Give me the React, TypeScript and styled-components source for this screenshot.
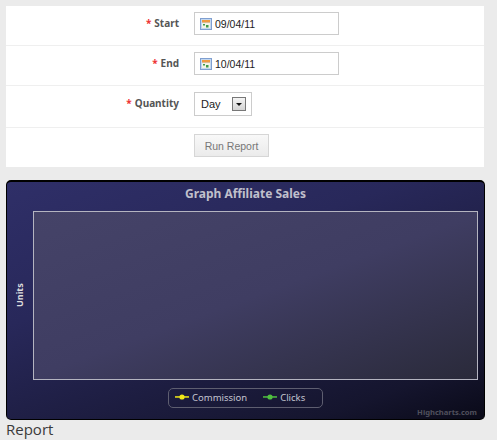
import * as React from "react";
import styled, { createGlobalStyle } from "styled-components";

const Global = createGlobalStyle`
  html, body {
    margin: 0;
    padding: 0;
    background: #ebebeb;
    overflow: hidden;
  }
`;

const Page = styled.div`
  width: 497px;
  height: 440px;
  padding: 6px 12px 0 6px;
  box-sizing: border-box;
  font-family: "Liberation Sans", Arial, sans-serif;
`;

const Form = styled.div`
  width: 478px;
  height: 161px;
  background: #fff;
  display: flex;
  flex-direction: column;
`;

const Row = styled.div<{ $h: number }>`
  height: ${p => p.$h}px;
  box-sizing: border-box;
  display: flex;
  padding-top: 6px;
  border-bottom: 1px solid #efefef;
  &:last-child {
    border-bottom: 0;
  }
`;

const Label = styled.div`
  width: 173px;
  text-align: right;
  font-family: "Noto Sans", sans-serif;
  font-size: 10px;
  font-weight: bold;
  color: #555;
  padding-top: 4px;
  line-height: 14px;
`;

const Star = styled.span`
  color: #ee3333;
  margin-right: 3px;
`;

const Field = styled.div`
  margin-left: 15px;
`;

const DateBox = styled.div`
  width: 145px;
  height: 23px;
  box-sizing: border-box;
  border: 1px solid #ccc;
  display: flex;
  align-items: center;
  padding-left: 5px;
  gap: 3px;
  font-size: 10.5px;
  color: #222;
`;

const SelectBox = styled.div`
  width: 58px;
  height: 24px;
  box-sizing: border-box;
  border: 1px solid #ccc;
  display: flex;
  align-items: center;
  justify-content: space-between;
  padding: 0 5px 0 6px;
  font-size: 11px;
  color: #222;
`;

const Arrow = styled.div`
  width: 14px;
  height: 14px;
  box-sizing: border-box;
  border: 1px solid #777;
  background: linear-gradient(#f4f4f4, #d4d4d4);
  display: flex;
  align-items: center;
  justify-content: center;
  &::after {
    content: "";
    border-top: 3px solid #111;
    border-left: 3px solid transparent;
    border-right: 3px solid transparent;
  }
`;

const RunButton = styled.button`
  width: 75px;
  height: 23px;
  padding: 0;
  box-sizing: border-box;
  border: 1px solid #d6d6d6;
  background: linear-gradient(#f8f8f8, #ebebeb);
  color: #777;
  font-family: "Liberation Sans", Arial, sans-serif;
  font-size: 10.5px;
`;

const Chart = styled.div`
  position: relative;
  width: 479px;
  height: 240px;
  margin-top: 13px;
  box-sizing: border-box;
  border: 1px solid #000;
  border-top-width: 2px;
  border-radius: 5px;
  background: linear-gradient(160deg, #2f2f68 0%, #28285a 35%, #15152e 85%, #0a0a18 100%);
  display: flex;
  flex-direction: column;
  align-items: center;
  font-family: "Noto Sans", sans-serif;
`;

const ChartTitle = styled.div`
  height: 29px;
  padding-top: 3px;
  box-sizing: border-box;
  font-size: 12px;
  font-weight: bold;
  color: #c0c0cc;
  line-height: 17px;
`;

const PlotRow = styled.div`
  display: flex;
  align-self: stretch;
  height: 169px;
`;

const AxisTitle = styled.div`
  width: 26px;
  display: flex;
  align-items: center;
  justify-content: center;
  writing-mode: vertical-rl;
  transform: rotate(180deg);
  padding-left: 2px;
  box-sizing: border-box;
  font-size: 9px;
  font-weight: bold;
  color: #ddd;
`;

const Plot = styled.div`
  width: 445px;
  box-sizing: border-box;
  border: 1px solid #b4b4c0;
  background: linear-gradient(160deg, #454368 0%, #3f3d62 50%, #2a2a3a 100%);
`;

const Legend = styled.div`
  margin-top: 8px;
  width: 155px;
  height: 20px;
  box-sizing: border-box;
  border: 1px solid #5e5e70;
  border-radius: 5px;
  display: flex;
  align-items: center;
  padding: 0 0 2px 6px;
  gap: 16px;
  font-size: 9.5px;
  color: #c4c4d0;
`;

const LegendItem = styled.div`
  display: flex;
  align-items: center;
  gap: 3px;
`;

const Credit = styled.div`
  position: absolute;
  right: 7px;
  bottom: 2px;
  font-size: 7.6px;
  font-weight: bold;
  color: #50505c;
`;

const Heading = styled.div`
  font-family: "Open Sans", sans-serif;
  font-size: 15px;
  line-height: 19px;
  color: #3a3a3a;
`;

const CalendarIcon = () => (
  <svg width="12" height="12" viewBox="0 0 12 12">
    <rect x="0.5" y="0.5" width="11" height="11" fill="#c4d8f0" stroke="#7f9fd0" />
    <rect x="2" y="2" width="8" height="2.5" fill="#f09a40" />
    <rect x="2" y="5" width="8" height="5" fill="#f4f4e4" />
    <rect x="3" y="6" width="2" height="1.5" fill="#3f9a4a" />
    <rect x="6" y="7" width="2.5" height="2.5" fill="#3f9a4a" />
  </svg>
);

const LegendMark = ({ color }: { color: string }) => (
  <svg width="14" height="6" viewBox="0 0 14 6">
    <rect x="0" y="2.2" width="14" height="1.5" fill={color} />
    <circle cx="7" cy="3" r="2.6" fill={color} />
  </svg>
);

const App = () => (
  <Page>
    <Global />
    <Form>
      <Row $h={40}>
        <Label><Star>*</Star>Start</Label>
        <Field>
          <DateBox><CalendarIcon />09/04/11</DateBox>
        </Field>
      </Row>
      <Row $h={40}>
        <Label><Star>*</Star>End</Label>
        <Field>
          <DateBox><CalendarIcon />10/04/11</DateBox>
        </Field>
      </Row>
      <Row $h={42}>
        <Label><Star>*</Star>Quantity</Label>
        <Field>
          <SelectBox>Day<Arrow /></SelectBox>
        </Field>
      </Row>
      <Row $h={39}>
        <Label />
        <Field>
          <RunButton>Run Report</RunButton>
        </Field>
      </Row>
    </Form>
    <Chart>
      <ChartTitle>Graph Affiliate Sales</ChartTitle>
      <PlotRow>
        <AxisTitle>Units</AxisTitle>
        <Plot />
      </PlotRow>
      <Legend>
        <LegendItem><LegendMark color="#f0e818" />Commission</LegendItem>
        <LegendItem><LegendMark color="#50c040" />Clicks</LegendItem>
      </Legend>
      <Credit>Highcharts.com</Credit>
    </Chart>
    <Heading>Report</Heading>
  </Page>
);

export default App;
